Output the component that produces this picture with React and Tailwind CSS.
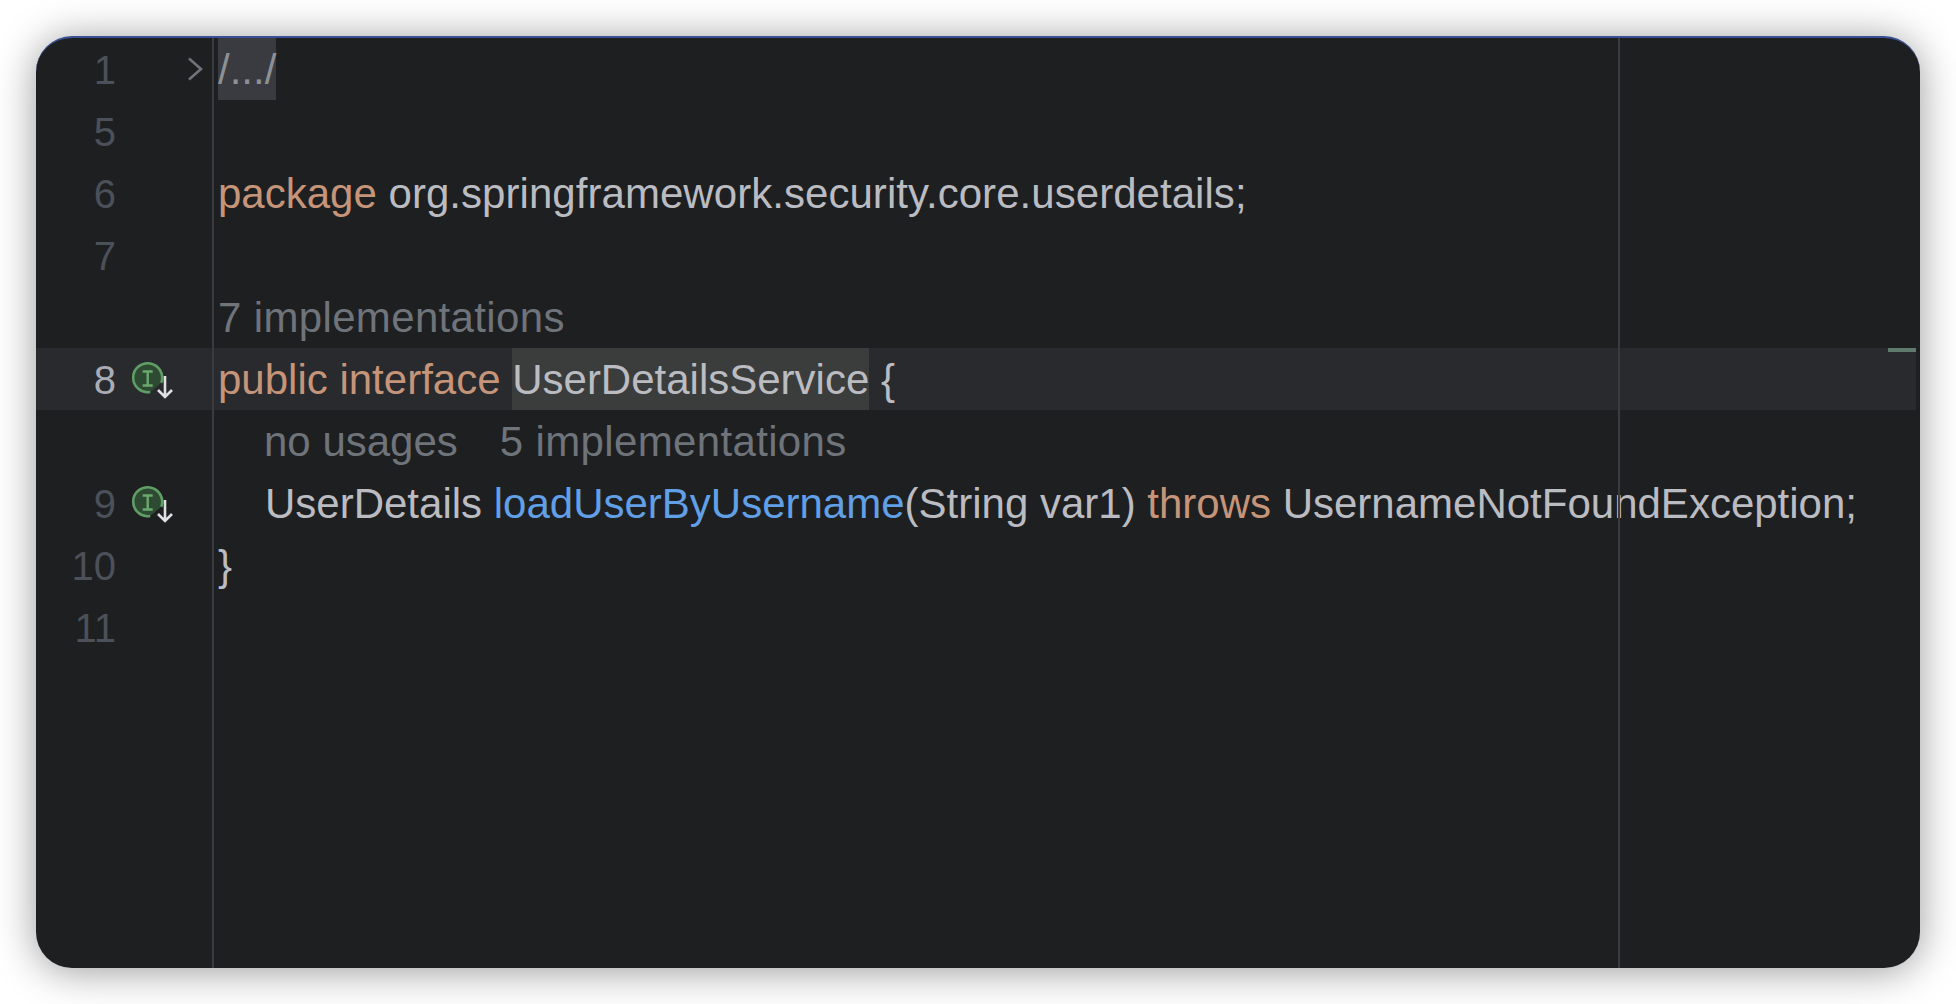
const font = { fontFamily: '"Liberation Sans", Arial, sans-serif' };

function MarkerIcon() {
  return (
    <svg width="50" height="44" viewBox="0 0 50 44" className="absolute left-[94px] top-[10px]" fill="none">
      <path d="M31.3 24.7 A14.5 14.5 0 1 0 20.2 34" fill="#2e4a33" stroke="#5f9e64" strokeWidth="2.6" />
      <path d="M12.7 13.5 h10 M12.7 27.5 h10 M17.7 13.5 V27.5" stroke="#6aa96d" strokeWidth="2.4" />
      <path d="M35 18 V38.5 M28 32 L35 39 L42 32" stroke="#dfe1e5" strokeWidth="2.6" />
    </svg>
  );
}

function Row({ num, active, icon, fold, children }) {
  return (
    <div className={`flex h-[62px] ${active ? 'mr-[4px] bg-[#292a2e]' : ''}`}>
      <div className="relative h-full w-[182px] shrink-0 text-[40px]">
        {num && (
          <span className={`absolute right-[102px] top-[1px] leading-[62px] ${active ? 'text-[#a9acb4]' : 'text-[#4b5059]'}`}>
            {num}
          </span>
        )}
        {icon && <MarkerIcon />}
        {fold && (
          <svg width="18" height="26" viewBox="0 0 18 26" className="absolute left-[150px] top-[18px]" fill="none">
            <path d="M3 2.5 L15 13 L3 23.5" stroke="#6f7279" strokeWidth="2.6" />
          </svg>
        )}
      </div>
      <div className="whitespace-pre leading-[64px]">{children}</div>
    </div>
  );
}

const K = ({ children }) => <span className="text-[#c69579]">{children}</span>;
const H = ({ children }) => <span className="text-[#6f737a]">{children}</span>;
const Impl = ({ n }) => <span className="tracking-[0.35px] text-[#6f737a]">{n} implementations</span>;

export default function App() {
  return (
    <div className="h-[1004px] w-[1956px] bg-white pl-[36px] pt-[36px]" style={font}>
      <div className="relative h-[932px] w-[1884px] overflow-hidden rounded-[36px] border-t-2 border-[#3a5096] bg-[#1e1f21] text-[42px] text-[#bbbcc2] shadow-[0_3px_40px_rgba(0,0,0,0.4)]">
        <Row num="1" fold>
          <span className="inline-block h-[62px] bg-[#393b40] align-top text-[#8e9096]">/.../</span>
        </Row>
        <Row num="5" />
        <Row num="6"><K>package</K> <span className="tracking-[0.05px]">org.springframework.security.core.userdetails;</span></Row>
        <Row num="7" />
        <Row><Impl n="7" /></Row>
        <Row num="8" active icon>
          <K>public</K> <K>interface</K> <span className="inline-block h-[62px] bg-[#3b3d3c] align-top">UserDetailsService</span> {'{'}
        </Row>
        <Row><span className="pl-[46px]"><H>no usages</H><span className="ml-[42px]"><Impl n="5" /></span></span></Row>
        <Row num="9" icon>
          <span className="pl-[47px]">UserDetails <span className="text-[#619fe6]">loadUserByUsername</span>(String var1) <K>throws</K> UsernameNotFoundException;</span>
        </Row>
        <Row num="10">{'}'}</Row>
        <Row num="11" />
        <div className="absolute bottom-0 left-[176px] top-0 w-[2px] bg-[#393b40]" />
        <div className="absolute bottom-0 left-[1582px] top-0 w-[2px] bg-[#393b40]" />
        <div className="absolute left-[1852px] top-[310px] h-[4px] w-[28px] bg-[#5f7a6c]" />
      </div>
    </div>
  );
}
